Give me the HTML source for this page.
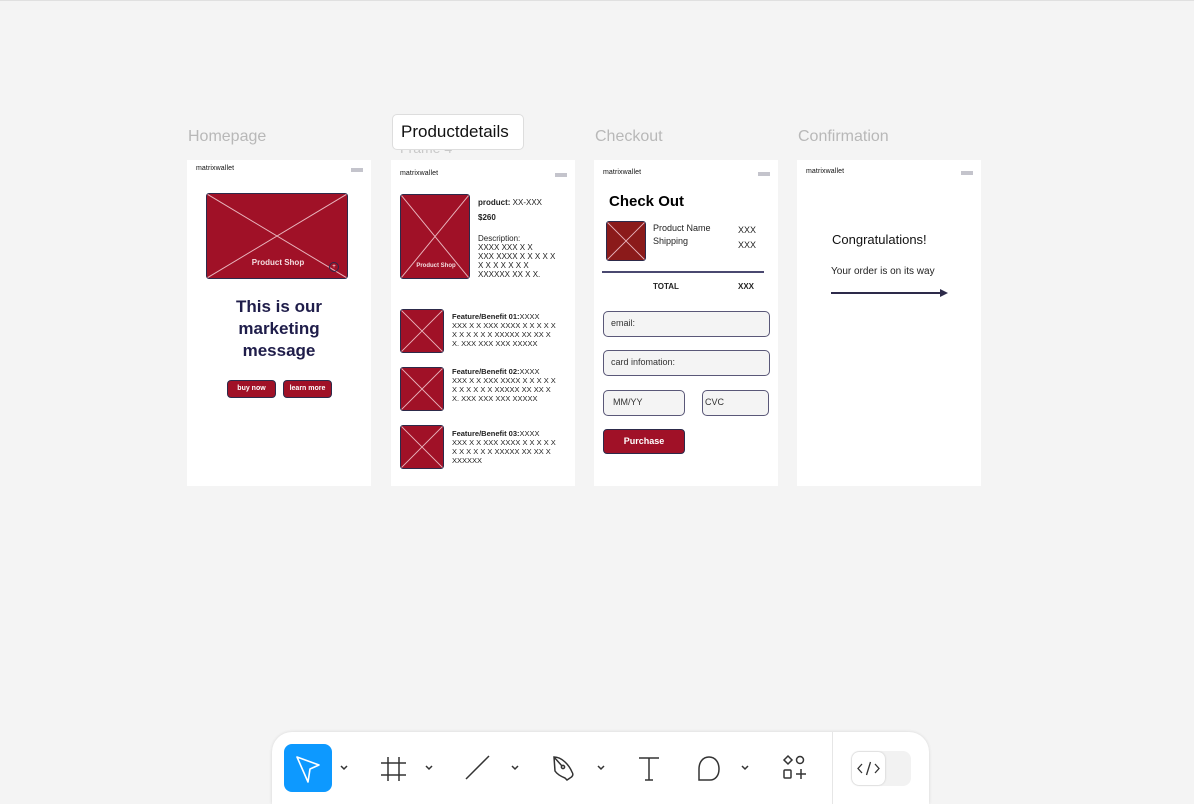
<!DOCTYPE html>
<html><head><meta charset="utf-8"><style>
*{margin:0;padding:0;box-sizing:border-box}
html,body{width:1194px;height:804px;overflow:hidden}
body{background:#f4f4f4;position:relative;font-family:"Liberation Sans",sans-serif}
.a{position:absolute}
.fr{position:absolute;background:#fff;top:160px;width:184px;height:326px}
.lbl{position:absolute;top:128px;font-size:16px;color:#b8b8b8}
.logo{position:absolute;font-size:7px;color:#111;letter-spacing:.1px}
.menu{position:absolute;width:12px;height:4px;background:#c4c4cc}
.img{position:absolute;background:#a01127;border:1.5px solid #2d2a4a;border-radius:3px;overflow:hidden}
.img svg{position:absolute;left:0;top:0;width:100%;height:100%}
.t{position:absolute;font-size:8px;color:#222;line-height:9px}
.btn{position:absolute;background:#a01127;border:1.5px solid #2d2a4a;border-radius:4px;color:#fff;font-size:7px;font-weight:bold;text-align:center}
.inp{position:absolute;background:#f4f4f4;border:1.5px solid #5a5878;border-radius:5px;font-size:9px;color:#333;padding-left:7px}
</style></head><body>
<div class="a" style="left:0;top:0;width:1194px;height:1px;background:#e0e0e0"></div>
<div class="lbl" style="left:188px">Homepage</div>
<div class="lbl" style="left:595px">Checkout</div>
<div class="lbl" style="left:798px">Confirmation</div>
<div class="a" style="left:400px;top:140px;font-size:14px;color:#c8c8c8">Frame 4</div>
<div class="a" style="left:392px;top:114px;width:132px;height:36px;background:#fff;border:1px solid #ddd;border-radius:5px;font-size:17px;color:#111;padding:7px 0 0 8px">Productdetails</div>

<!-- Homepage -->
<div class="fr" style="left:187px"></div>
<div class="logo" style="left:196px;top:165px">matrixwallet</div>
<div class="menu" style="left:351px;top:168px"></div>
<div class="img" style="left:206px;top:193px;width:142px;height:86px"><svg viewBox="0 0 142 86" preserveAspectRatio="none"><path d="M0 0L142 86M142 0L0 86" stroke="#e8b4bc" stroke-width="1"/></svg>
<div class="a" style="left:0;width:142px;top:64px;text-align:center;color:#f3dde0;font-size:8px;font-weight:bold">Product Shop</div>
<div class="a" style="left:122px;top:68px;width:10px;height:10px;border:1px solid #2d2a4a;border-radius:50%;color:#fff;font-size:6px;text-align:center;line-height:8px">+</div></div>
<div class="a" style="left:200px;top:296px;width:158px;text-align:center;font-size:17px;font-weight:bold;color:#1f1d4a;line-height:22px">This is our marketing message</div>
<div class="btn" style="left:227px;top:380px;width:49px;height:18px;line-height:15px">buy now</div>
<div class="btn" style="left:283px;top:380px;width:49px;height:18px;line-height:15px">learn more</div>

<!-- Product details -->
<div class="fr" style="left:391px"></div>
<div class="logo" style="left:400px;top:170px">matrixwallet</div>
<div class="menu" style="left:555px;top:173px"></div>
<div class="img" style="left:400px;top:194px;width:70px;height:85px"><svg viewBox="0 0 70 85" preserveAspectRatio="none"><path d="M0 0L70 85M70 0L0 85" stroke="#e8b4bc" stroke-width="1"/></svg>
<div class="a" style="left:0;width:70px;top:68px;text-align:center;color:#f3dde0;font-size:6px;font-weight:bold">Product Shop</div></div>
<div class="t" style="left:478px;top:198px"><b>product:</b> XX-XXX</div>
<div class="t" style="left:478px;top:213px;font-weight:bold">$260</div>
<div class="t" style="left:478px;top:234px">Description:<br>XXXX XXX X X<br>XXX XXXX X X X X X<br>X X X X X X X<br>XXXXXX XX X X.</div>
<div class="img" style="left:400px;top:309px;width:44px;height:44px"><svg viewBox="0 0 44 44"><path d="M0 0L44 44M44 0L0 44" stroke="#e8b4bc"/></svg></div>
<div class="img" style="left:400px;top:367px;width:44px;height:44px"><svg viewBox="0 0 44 44"><path d="M0 0L44 44M44 0L0 44" stroke="#e8b4bc"/></svg></div>
<div class="img" style="left:400px;top:425px;width:44px;height:44px"><svg viewBox="0 0 44 44"><path d="M0 0L44 44M44 0L0 44" stroke="#e8b4bc"/></svg></div>
<div class="t" style="left:452px;top:312px;font-size:7.5px"><b>Feature/Benefit 01:</b>XXXX<br>XXX X X XXX XXXX X X X X X<br>X X X X X X XXXXX XX XX X<br>X. XXX XXX XXX XXXXX</div>
<div class="t" style="left:452px;top:367px;font-size:7.5px"><b>Feature/Benefit 02:</b>XXXX<br>XXX X X XXX XXXX X X X X X<br>X X X X X X XXXXX XX XX X<br>X. XXX XXX XXX XXXXX</div>
<div class="t" style="left:452px;top:429px;font-size:7.5px"><b>Feature/Benefit 03:</b>XXXX<br>XXX X X XXX XXXX X X X X X<br>X X X X X X XXXXX XX XX X<br>XXXXXX</div>

<!-- Checkout -->
<div class="fr" style="left:594px"></div>
<div class="logo" style="left:603px;top:169px">matrixwallet</div>
<div class="menu" style="left:758px;top:172px"></div>
<div class="a" style="left:609px;top:193px;font-size:15px;font-weight:bold;color:#000">Check Out</div>
<div class="img" style="left:606px;top:221px;width:40px;height:40px;background:#8b1a1a"><svg viewBox="0 0 40 40"><path d="M0 0L40 40M40 0L0 40" stroke="#e8b4bc"/></svg></div>
<div class="t" style="left:653px;top:222px;font-size:9px;line-height:13px">Product Name<br>Shipping</div>
<div class="t" style="left:738px;top:223px;font-size:9px;line-height:15px">XXX<br>XXX</div>
<div class="a" style="left:602px;top:271px;width:162px;height:2px;background:#4a4870"></div>
<div class="t" style="left:653px;top:282px;font-weight:bold">TOTAL</div>
<div class="t" style="left:738px;top:282px;font-weight:bold">XXX</div>
<div class="inp" style="left:603px;top:311px;width:167px;height:26px;line-height:23px">email:</div>
<div class="inp" style="left:603px;top:350px;width:167px;height:26px;line-height:23px">card infomation:</div>
<div class="inp" style="left:603px;top:390px;width:82px;height:26px;line-height:23px;padding-left:9px">MM/YY</div>
<div class="inp" style="left:702px;top:390px;width:67px;height:26px;line-height:23px;padding-left:2px">CVC</div>
<div class="btn" style="left:603px;top:429px;width:82px;height:25px;line-height:22px;font-size:9px">Purchase</div>

<!-- Confirmation -->
<div class="fr" style="left:797px"></div>
<div class="logo" style="left:806px;top:168px">matrixwallet</div>
<div class="menu" style="left:961px;top:171px"></div>
<div class="a" style="left:832px;top:232px;font-size:13px;color:#111">Congratulations!</div>
<div class="a" style="left:831px;top:266px;font-size:10px;color:#222">Your order is on its way</div>
<svg class="a" style="left:830px;top:288px" width="120" height="10"><path d="M1 5H112" stroke="#2d2a4a" stroke-width="2"/><path d="M110 1L118 5L110 9Z" fill="#2d2a4a"/></svg>

<!-- Toolbar -->
<div class="a" style="left:272px;top:732px;width:657px;height:72px;background:#fff;border-radius:20px 20px 0 0;box-shadow:0 0 3px rgba(0,0,0,.12)"></div>
<div class="a" style="left:284px;top:744px;width:48px;height:48px;background:#0d99ff;border-radius:8px"></div>
<svg class="a" style="left:284px;top:744px" width="48" height="48"><path d="M13 13L35 21L26 25L24 38Z" fill="none" stroke="#fff" stroke-width="1.6" stroke-linejoin="round"/></svg>
<svg class="a" style="left:270px;top:728px" width="665" height="76" fill="none" stroke="#333" stroke-width="1.5">
<path d="M71 38l3 3 3-3M156 38l3 3 3-3M242 38l3 3 3-3M328 38l3 3 3-3M472 38l3 3 3-3"/>
<path d="M118 29v24M129 29v24M111 35h25M111 47h25"/>
<path d="M196 51L219 28"/>
<path d="M284 29c8 0 15 8 18 15 2 3 0 5-2 6l-3 2-2-2c-5-2-8-4-10-7z M284 29l8 9"/><circle cx="293" cy="39" r="1.6"/>
<path d="M369 30h20M379 30v22M375 52h8"/>
<path d="M429 52v-11c0-7 4-12 10-12s10 5 10 12c0 7-4 11-9 11z"/>
<path d="M518 28l4 4-4 4-4-4z"/><circle cx="530" cy="32" r="3.5"/><rect x="514" y="42" width="7" height="8" rx="1"/><path d="M526 46h10M531 41v10"/>
</svg>
<div class="a" style="left:832px;top:732px;width:1px;height:72px;background:#e6e6e6"></div>
<div class="a" style="left:851px;top:751px;width:60px;height:35px;background:#f2f2f2;border-radius:8px"></div>
<div class="a" style="left:852px;top:752px;width:33px;height:33px;background:#fff;border-radius:7px;box-shadow:0 0 2px rgba(0,0,0,.2)"></div>
<svg class="a" style="left:852px;top:752px" width="33" height="33" fill="none" stroke="#333" stroke-width="1.3"><path d="M10 12l-4 4.5 4 4.5M23 12l4 4.5-4 4.5M18.5 10l-4 13"/></svg>
</body></html>
